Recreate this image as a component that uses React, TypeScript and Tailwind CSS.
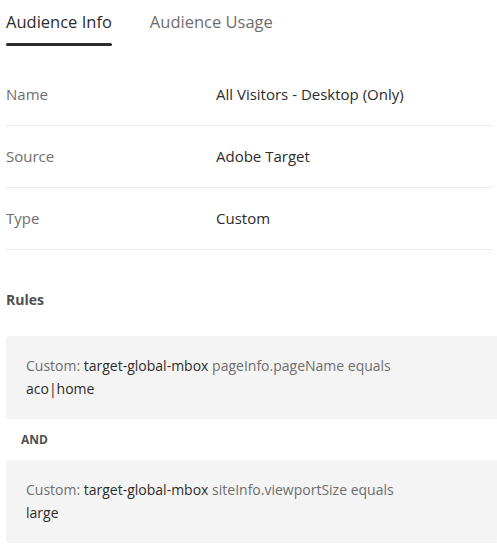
const rows = [
  { label: 'Name', value: 'All Visitors - Desktop (Only)' },
  { label: 'Source', value: 'Adobe Target' },
  { label: 'Type', value: 'Custom' },
];

const rules = [
  { mbox: 'target-global-mbox', param: 'pageInfo.pageName equals', value: 'aco|home' },
  { mbox: 'target-global-mbox', param: 'siteInfo.viewportSize equals', value: 'large' },
];

const RuleCard = ({ mbox, param, value }: { mbox: string; param: string; value: string }) => (
  <div className="bg-[#f4f4f4] rounded-[4px] -mr-[6px] pl-5 pr-4 pt-[18px] pb-[19px] text-[14px] leading-[23px]">
    <div>
      <span className="text-[#6e6e6e]">Custom: </span>
      <span className="text-[#2c2c2c]">{mbox}</span>
      <span className="text-[#6e6e6e]"> {param}</span>
    </div>
    <div className="text-[#2c2c2c]">{value}</div>
  </div>
);

const App = () => {
  return (
    <div className="min-h-screen bg-white font-['Open_Sans',sans-serif] pl-[6px] pr-[4px]">
      <nav className="flex gap-[38px] pt-[8px]">
        <div className="flex flex-col">
          <span className="text-[16.5px] leading-[28px] text-[#2c2c2c]">Audience Info</span>
          <div className="h-[3px] bg-[#2c2c2c] rounded-full mt-[7px]"></div>
        </div>
        <span className="text-[16.5px] leading-[28px] text-[#6e6e6e]">Audience Usage</span>
      </nav>

      <div className="mt-[18px]">
        {rows.map((row) => (
          <div key={row.label} className="flex items-center h-[62px] border-b border-[#ebebeb] text-[15px]">
            <span className="w-[210px] text-[#6e6e6e]">{row.label}</span>
            <span className="text-[#2c2c2c]">{row.value}</span>
          </div>
        ))}
      </div>

      <h3 className="mt-[40px] text-[14px] font-bold text-[#505050] leading-[20px]">Rules</h3>

      <div className="mt-[26px]">
        <RuleCard {...rules[0]} />
        <div className="text-[12px] font-bold text-[#505050] pl-[15px] py-[12px] leading-[17px]">AND</div>
        <RuleCard {...rules[1]} />
      </div>
    </div>
  );
};

export default App;
